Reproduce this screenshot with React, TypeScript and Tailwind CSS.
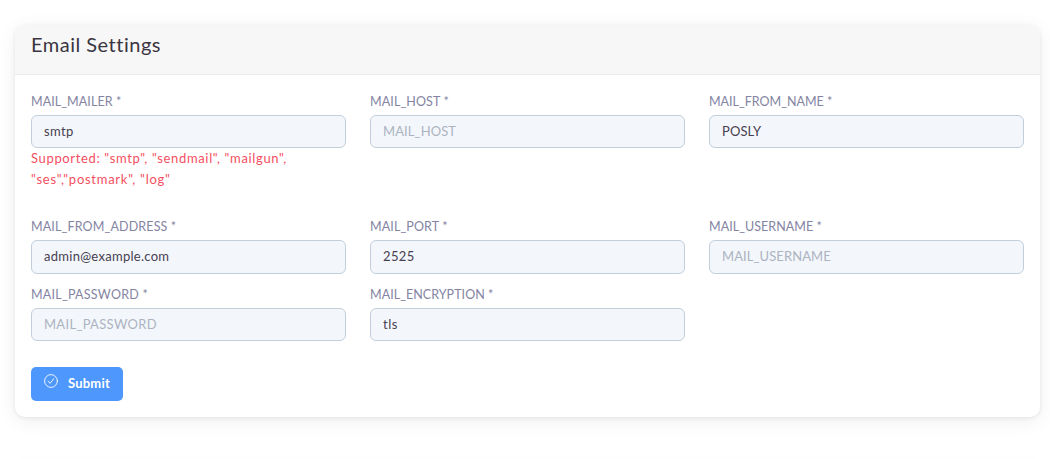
import type { ReactNode } from "react";

type FieldProps = {
  label: string;
  labelClass: string;
  value?: string;
  placeholder?: string;
  inputClass: string;
  help?: ReactNode;
};

const cardShadow =
  "rounded-[10px] bg-white shadow-[0_4px_20px_1px_rgba(0,0,0,0.06),0_1px_4px_rgba(0,0,0,0.08)]";

function Field({ label, labelClass, value, placeholder, inputClass, help }: FieldProps) {
  return (
    <div className="flex flex-col items-start">
      <label className={`block h-[22px] text-[12.5px] leading-[17px] whitespace-nowrap text-[#8484a2] ${labelClass}`}>
        {label}
      </label>
      <input
        type="text"
        defaultValue={value}
        placeholder={placeholder}
        className={`block w-full rounded-[6px] border border-[#c2cfdb] bg-[#f3f7fc] px-3 text-[13px] text-[#47404f] outline-none placeholder:text-[#acb3c0] placeholder:opacity-100 ${inputClass}`}
      />
      {help}
    </div>
  );
}

export default function App() {
  return (
    <div className="h-[459px] overflow-hidden bg-white px-[15px] pt-[25px] pr-[10px] font-['Lato',sans-serif]">
      <section className={`h-[392px] w-[1025px] ${cardShadow}`}>
        <header className="h-[50px] rounded-t-[10px] border-b border-[#ebebed] bg-[#f7f7f7] px-4 pt-[6px]">
          <h1 className="text-[20px] leading-[26px] tracking-[0.5px] text-[#3a3540]">Email Settings</h1>
        </header>
        <form className="px-4 pt-[18px]" onSubmit={(e) => e.preventDefault()}>
          <div className="grid grid-cols-3 grid-rows-[125px_68px_74px] gap-x-6">
            <Field
              label="MAIL_MAILER *"
              labelClass="tracking-[0.08px]"
              value="smtp"
              inputClass="h-[33px] pb-0.5 tracking-[0.4px]"
              help={
                <p className="text-[13px] leading-[20.5px] whitespace-nowrap text-[#f44f61]">
                  <span className="tracking-[0.65px]">Supported: "smtp", "sendmail", "mailgun",</span>
                  <br />
                  <span className="tracking-[0.73px]">"ses","postmark", "log"</span>
                </p>
              }
            />
            <Field label="MAIL_HOST *" labelClass="tracking-[0.12px]" placeholder="MAIL_HOST" inputClass="h-[33px] pb-0.5 tracking-[0.1px]" />
            <Field label="MAIL_FROM_NAME *" labelClass="tracking-[0px]" value="POSLY" inputClass="h-[33px] pb-0.5 tracking-[0.1px]" />
            <Field label="MAIL_FROM_ADDRESS *" labelClass="tracking-[0.15px]" value="admin@example.com" inputClass="h-[34px] pb-[3px] tracking-[0.28px]" />
            <Field label="MAIL_PORT *" labelClass="tracking-[0.12px]" value="2525" inputClass="h-[34px] pb-[3px] tracking-[0.35px]" />
            <Field label="MAIL_USERNAME *" labelClass="tracking-[0.05px]" placeholder="MAIL_USERNAME" inputClass="h-[34px] pb-[3px] tracking-[0.08px]" />
            <Field label="MAIL_PASSWORD *" labelClass="tracking-[0.25px]" placeholder="MAIL_PASSWORD" inputClass="h-[33px] pb-0.5 tracking-[0.3px]" />
            <Field label="MAIL_ENCRYPTION *" labelClass="tracking-[0.05px]" value="tls" inputClass="h-[33px] pb-0.5 tracking-[0.5px]" />
          </div>
          <button
            type="submit"
            className="mt-[7px] flex h-[34px] w-[92px] rounded-[5px] bg-[#4e97fd] pt-[7px] pl-[13px] text-white"
          >
            <svg viewBox="0 0 14 14" className="size-3.5 shrink-0" fill="none" stroke="currentColor" strokeWidth="0.9" strokeLinecap="round" strokeLinejoin="round">
              <circle cx="7" cy="7" r="6.4" />
              <path d="M4 7.2 6.2 9.3 9.7 4.7" />
            </svg>
            <span className="ml-[10px] text-[13px] leading-[18px] font-bold tracking-[0.2px]">Submit</span>
          </button>
        </form>
      </section>
      <section className={`mt-[50px] h-[200px] w-[1025px] ${cardShadow}`} />
    </div>
  );
}
